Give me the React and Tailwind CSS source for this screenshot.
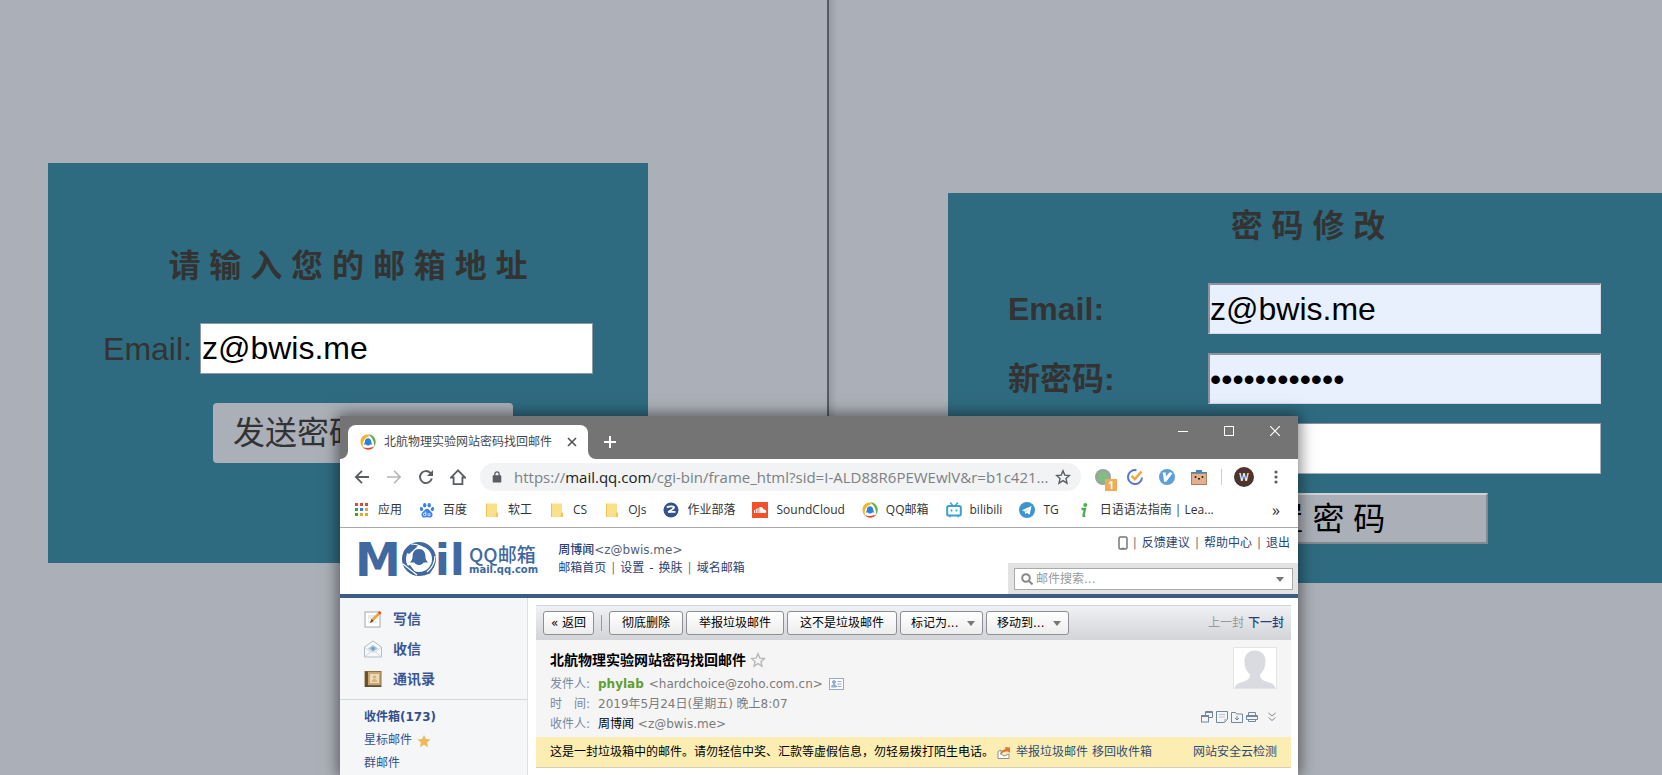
import React from "react";

const sans = "font-['Open_Sans','Noto_Sans_CJK_SC',sans-serif]";
const mailFont = "font-['DejaVu_Sans','Noto_Sans_CJK_SC',sans-serif]";
const formFont = "font-['Liberation_Sans','Noto_Sans_CJK_SC',sans-serif]";

/* ---------- icons ---------- */

function MailRing({ className = "size-4" }) {
  return (
    <svg viewBox="0 0 16 16" className={className} aria-hidden="true">
      <path d="M7 0.4C2.6 1 0 4.6 0.6 8.9c.3 1.9 1.200 3.600 2.500 4.700C1.900 9 3.200 4.200 9.600 2 8.900 1 8 .5 7 .4Z" fill="#f3b32a" />
      <path d="M8 .3c4.600 0 7.900 3.700 7.700 8-.1 1.700-.6 3.100-1.500 4.300C14.300 7.600 12.500 3.300 8 .3Z" fill="#5fae46" />
      <path d="M2.600 13c3.200 3.800 9 3.700 12-.8-3.800 1.900-8.200 2.300-12 .8Z" fill="#e2492f" />
      <path d="M8 4.300c2 0 3.100 1.500 3.200 3.300.1 1.400.5 2 1.300 2.900H10c-.2 1.400-3.600 1.400-3.900 0H3.600c.8-.9 1.200-1.600 1.300-2.900C5 5.800 6 4.300 8 4.300Z" fill="#2f80d6" />
    </svg>
  );
}

function Folder() {
  return (
    <svg viewBox="0 0 16 16" className="size-4" aria-hidden="true">
      <path d="M2 1.500h11v9.500h1V15H2Z" fill="#fbe08a" />
      <path d="M2 1.500h1v13.500H2ZM12.500 10 11.500 15H14v-4Z" fill="#eec65a" />
    </svg>
  );
}

function AppsIcon() {
  const colors = ["#d64b3f", "#d64b3f", "#d64b3f", "#3f9c4f", "#3f7bd8", "#e0a92e", "#3f9c4f", "#e0a92e", "#e0a92e"];
  return (
    <svg viewBox="0 0 16 16" className="size-4" aria-hidden="true">
      {colors.map((c, i) => (
        <rect key={i} x={1 + (i % 3) * 5} y={1 + Math.floor(i / 3) * 5} width="3" height="3" fill={c} />
      ))}
    </svg>
  );
}

function Paw() {
  return (
    <svg viewBox="0 0 16 16" className="size-4" fill="#3d7fe6" aria-hidden="true">
      <ellipse cx="5.700" cy="3.200" rx="1.700" ry="2.300" />
      <ellipse cx="10.200" cy="3.200" rx="1.700" ry="2.300" />
      <ellipse cx="2.500" cy="7" rx="1.600" ry="2.100" transform="rotate(-15 2.500 7)" />
      <ellipse cx="13.500" cy="7" rx="1.600" ry="2.100" transform="rotate(15 13.500 7)" />
      <path d="M8 6.800c1.600 0 2.100 1.200 3.200 2.300 1.200 1.200 2.600 2.200 2.300 4.200-.3 2-1.900 2.500-3.600 2.200-1.300-.3-2.500-.3-3.800 0-1.700.3-3.300-.2-3.600-2.200-.3-2 1.100-3 2.300-4.200C5.900 8 6.400 6.800 8 6.800Z" />
      <path d="M6.800 9.500v4.200H5.500a1.200 1.200 0 0 1 0-2.500h1.300M9 11v2.100q0 .6.600.6h1.300V11" fill="none" stroke="#fff" strokeWidth=".8" />
    </svg>
  );
}

function ZIcon() {
  return (
    <svg viewBox="0 0 16 16" className="size-4" aria-hidden="true">
      <circle cx="8" cy="8" r="7.500" fill="#35508c" />
      <path d="M3.800 5.500c2.500-1.300 6-1.500 7.200-.3.800 1.600-3.500 2.800-5.800 5 2.500-.8 4.300-.2 7.300-.4" fill="none" stroke="#fff" strokeWidth="1.700" />
    </svg>
  );
}

function SoundCloud() {
  return (
    <svg viewBox="0 0 16 16" className="size-4" aria-hidden="true">
      <rect width="16" height="16" fill="#f0502a" />
      <path d="M2.500 8v3M4.300 6.800v4.200M6 6v5" stroke="#fff" strokeWidth="1" />
      <path d="M7.300 5.500c2-1.100 4 .1 4.200 2.100 1.600-.3 2.700.4 2.700 1.800 0 1-.7 1.700-1.700 1.700H7.300Z" fill="#fff" />
    </svg>
  );
}

function Bili() {
  return (
    <svg viewBox="0 0 16 16" className="size-4" fill="none" stroke="#3c9fce" aria-hidden="true">
      <path d="m4.500 1 2 2.300M11.500 1l-2 2.300" strokeWidth="1.500" strokeLinecap="round" />
      <rect x="1.200" y="4" width="13.600" height="9.500" rx="1.600" strokeWidth="2" />
      <path d="M5.500 7.500v2M10.500 7.500v2" strokeWidth="1.800" />
      <path d="M4 14v1.300M12 14v1.300" strokeWidth="1.500" />
    </svg>
  );
}

function Telegram() {
  return (
    <svg viewBox="0 0 16 16" className="size-4" aria-hidden="true">
      <circle cx="8" cy="8" r="8" fill="#3d95d0" />
      <path d="M3 8.200 12.600 4l-2 8.700-2.800-2-1.500 1.600-.5-2.900Z" fill="#fff" />
      <path d="m5.800 9.400 4.600-3.500-3.300 4.300Z" fill="#b9d9ee" />
    </svg>
  );
}

function GreenI() {
  return (
    <svg viewBox="0 0 16 16" className="size-4" aria-hidden="true">
      <circle cx="9.300" cy="3" r="1.900" fill="#4cae4c" />
      <path d="M5.500 7h3.500L7.400 13.500q0 1 1.800.3" fill="none" stroke="#4cae4c" strokeWidth="2.300" />
    </svg>
  );
}

function StarOutline({ className }) {
  return (
    <svg viewBox="0 0 16 16" className={className} fill="none" stroke="currentColor" strokeWidth="1.400" aria-hidden="true">
      <path d="m8 1.800 1.800 4.300 4.700.4L11 9.600l1 4.600-4-2.500-4 2.500 1-4.600-3.500-3.100 4.700-.4Z" />
    </svg>
  );
}

function Caret() {
  return (
    <svg viewBox="0 0 8 5" className="h-[5px] w-2" aria-hidden="true">
      <path d="M0 0h8L4 5Z" fill="#777" />
    </svg>
  );
}

/* ---------- background pages ---------- */

function SendResetPage() {
  return (
    <section className="bg-[#abafb7] pt-[163px] pl-12">
      <form className="flex h-[400px] w-[600px] flex-col items-center bg-[#2f6b80] pt-[79px] text-[32px] text-[#333]" onSubmit={(e) => e.preventDefault()}>
        <h1 className="leading-[48px] font-bold">请 输 入 您 的 邮 箱 地 址</h1>
        <div className="mt-[33px] flex items-center gap-2">
          <label htmlFor="reset-email">Email:</label>
          <input id="reset-email" type="text" defaultValue="z@bwis.me" className="h-[51px] w-[393px] border border-[#8b9aa6] bg-white px-px text-black" />
        </div>
        <button className="mt-[29px] ml-[30px] h-[60px] w-[300px] rounded bg-[#abafb7] pl-5 text-left">发送密码邮件</button>
      </form>
    </section>
  );
}

function FieldRow({ id, label, type, value, filled }) {
  return (
    <div className="flex h-[51px] items-center">
      <label htmlFor={id} className="w-[200px] font-bold">{label}</label>
      <input
        id={id}
        type={type}
        defaultValue={value}
        className={
          filled
            ? "h-full w-[393px] border-t-2 border-l-2 border-r border-b border-t-[#8f929b] border-l-[#8f929b] border-r-[#d5dae6] border-b-[#d5dae6] bg-[#e8f0fe] text-black"
            : "h-full w-[393px] border border-t-[#8f929b] border-l-[#8f929b] border-r-[#a5b0bb] border-b-[#a5b0bb] bg-white text-black"
        }
      />
    </div>
  );
}

function ChangePasswordPage() {
  return (
    <section className="overflow-hidden border-l-2 border-[#565b63] bg-[linear-gradient(to_right,#979ba3,#abafb7_8px)] pt-[193px] pl-[119px]">
      <form className="flex h-[390px] w-[720px] flex-col bg-[#2f6b80] px-[60px] pt-[9px] text-[32px] text-[#333]" onSubmit={(e) => e.preventDefault()}>
        <h1 className="text-center leading-[48px] font-bold">密 码 修 改</h1>
        <div className="mt-[33px] flex flex-col gap-[19px]">
          <FieldRow id="cp-email" label="Email:" type="text" value="z@bwis.me" filled />
          <FieldRow id="cp-new" label="新密码:" type="password" value="abcdefghijkl" filled />
          <FieldRow id="cp-repeat" label="确认密码:" type="password" value="" />
        </div>
        <button className="mt-[19px] h-[51px] w-[360px] self-center border-2 border-[#d0d2d8] border-r-[#85888f] border-b-[#85888f] bg-[#abafb7] leading-none text-black">
          重 置 密 码
        </button>
      </form>
    </section>
  );
}

/* ---------- browser chrome ---------- */

function TitleBar() {
  return (
    <div className="flex h-[43px] items-start bg-[#747474] text-white">
      <div className="flex h-full flex-none items-end">
        <svg viewBox="0 0 8 8" className="size-2" aria-hidden="true"><path d="M8 0v8H0a8 8 0 0 0 8-8Z" fill="#fff" /></svg>
        <div className="flex h-[34px] w-60 items-center rounded-t-lg bg-white pr-2 pl-3 text-[#45494d]">
          <MailRing />
          <span className="ml-2 flex-1 text-xs whitespace-nowrap">北航物理实验网站密码找回邮件</span>
          <button aria-label="关闭标签页" className="flex size-4 items-center justify-center">
            <svg viewBox="0 0 10 10" className="size-2.5" stroke="#555" strokeWidth="1.700"><path d="m1 1 8 8M9 1 1 9" /></svg>
          </button>
        </div>
        <svg viewBox="0 0 8 8" className="size-2" aria-hidden="true"><path d="M0 0v8h8a8 8 0 0 1-8-8Z" fill="#fff" /></svg>
      </div>
      <button aria-label="新标签页" className="mt-[18px] ml-1.5 flex size-4 items-center justify-center">
        <svg viewBox="0 0 12 12" className="size-3" stroke="#fff" strokeWidth="2"><path d="M6 0v12M0 6h12" /></svg>
      </button>
      <div className="ml-auto flex h-[30px]">
        <button aria-label="最小化" className="flex w-[46px] items-center justify-center">
          <svg viewBox="0 0 10 10" className="size-[10px]" stroke="#fff"><path d="M0 5.500h10" /></svg>
        </button>
        <button aria-label="最大化" className="flex w-[46px] items-center justify-center">
          <svg viewBox="0 0 10 10" className="size-[10px]" fill="none" stroke="#fff"><rect x=".5" y=".5" width="9" height="9" /></svg>
        </button>
        <button aria-label="关闭" className="flex w-[46px] items-center justify-center">
          <svg viewBox="0 0 10 10" className="size-[10px]" stroke="#fff" strokeWidth="1.200"><path d="m0 0 10 10M10 0 0 10" /></svg>
        </button>
      </div>
    </div>
  );
}

function ToolButton({ label, children }) {
  return <button aria-label={label} className="flex size-8 flex-none items-center justify-center">{children}</button>;
}

function AddressBar() {
  return (
    <div className="flex h-9 items-center bg-white pr-1.5 pl-1.5 text-[#5a5d61]">
      <ToolButton label="后退">
        <svg viewBox="0 0 16 16" className="size-4" fill="none" stroke="currentColor" strokeWidth="1.800"><path d="M15 8H2M8 1.800 1.800 8 8 14.200" /></svg>
      </ToolButton>
      <ToolButton label="前进">
        <svg viewBox="0 0 16 16" className="size-4" fill="none" stroke="#b5b5b5" strokeWidth="1.600"><path d="M1 8h13M8 1.800 14.200 8 8 14.200" /></svg>
      </ToolButton>
      <ToolButton label="重新加载">
        <svg viewBox="0 0 16 16" className="size-4" fill="none" stroke="currentColor" strokeWidth="1.900"><path d="M13.800 9.500A6 6 0 1 1 12.300 3.900L14 5.600" /><path d="M15 1v6H9Z" fill="currentColor" stroke="none" /></svg>
      </ToolButton>
      <ToolButton label="主页">
        <svg viewBox="0 0 16 16" className="size-4" fill="none" stroke="currentColor" strokeWidth="1.800"><path d="M8 1.300.9 8.500h2.700v6.600h8.800V8.500h2.700Z" /></svg>
      </ToolButton>
      <div className="ml-1.5 flex h-7 min-w-0 flex-1 items-center rounded-full bg-[#f1f3f4] pr-2.5 pl-3">
        <svg viewBox="0 0 10 14" className="h-3 w-[10px] flex-none" aria-hidden="true">
          <rect x="0" y="5" width="10" height="8.500" rx="1" fill="#5a5d61" />
          <path d="M2.500 6V3.500a2.500 2.500 0 0 1 5 0V6" fill="none" stroke="#5a5d61" strokeWidth="1.500" />
        </svg>
        <a href="#address" className="ml-3 flex-1 text-[15px] leading-5 whitespace-nowrap text-[#7d8084]">
          https://<span className="text-[#202124]">mail.qq.com</span>/cgi-bin/frame_html?sid=I-ALD88R6PEWEwlV&amp;r=b1c421...
        </a>
        <button aria-label="收藏"><StarOutline className="size-4" /></button>
      </div>
      <div className="ml-1.5 flex items-center">
        <ToolButton label="扩展一">
          <span className="relative">
            <svg viewBox="0 0 16 16" className="size-4"><circle cx="8" cy="8" r="8" fill="#9aa39c" /><circle cx="8" cy="8" r="5.500" fill="#84bd84" /></svg>
            <span className="absolute -right-1.5 -bottom-1.5 flex h-3 w-3 items-center justify-center bg-[#efab55] text-[10px] leading-none font-bold text-white">1</span>
          </span>
        </ToolButton>
        <ToolButton label="扩展二">
          <svg viewBox="0 0 16 16" className="size-4" fill="none"><path d="M9.500 1.200A7 7 0 1 0 15 8.500" stroke="#5478d8" strokeWidth="2" /><path d="m4.500 6.800 3.300 3.300L14.500 2.500" stroke="#f2a93b" strokeWidth="2.600" /></svg>
        </ToolButton>
        <ToolButton label="扩展三">
          <svg viewBox="0 0 16 16" className="size-4"><circle cx="8" cy="8" r="8" fill="#5f9fd8" /><path d="M3.500 3.500h3.300v4L11 3l2.500 1.300L7.200 12.800H5L4.300 6.500Z" fill="#fff" /></svg>
        </ToolButton>
        <ToolButton label="扩展四">
          <svg viewBox="0 0 16 16" className="size-4"><path d="M5 1h6v2h5v3H0V3h5Z" fill="#3f86cf" /><rect x=".5" y="4.500" width="15" height="11" fill="#e2b18c" stroke="#a87f62" /><circle cx="4.500" cy="8" r="1" fill="#222" /><circle cx="11.500" cy="8" r="1" fill="#222" /><path d="m7 10 1-1 1 1Z" fill="#222" stroke="#222" /></svg>
        </ToolButton>
        <span className="mx-1.5 h-4 w-px bg-[#ccc]" />
        <ToolButton label="个人资料"><span className="flex size-5 items-center justify-center rounded-full bg-[#4e342e] text-[10px] font-semibold text-white">W</span></ToolButton>
        <ToolButton label="菜单">
          <svg viewBox="0 0 4 16" className="h-4 w-1" fill="#5a5d61"><circle cx="2" cy="3" r="1.600" /><circle cx="2" cy="8" r="1.600" /><circle cx="2" cy="13" r="1.600" /></svg>
        </ToolButton>
      </div>
    </div>
  );
}

const bookmarks = [
  [AppsIcon, "应用"],
  [Paw, "百度"],
  [Folder, "软工"],
  [Folder, "CS"],
  [Folder, "OJs"],
  [ZIcon, "作业部落"],
  [SoundCloud, "SoundCloud"],
  [MailRing, "QQ邮箱"],
  [Bili, "bilibili"],
  [Telegram, "TG"],
  [GreenI, "日语语法指南 | Lea..."],
];

function Bookmarks() {
  return (
    <nav aria-label="书签" className="flex h-[33px] items-center gap-[17px] border-b border-[#aaa] bg-white pr-[18px] pb-0.5 pl-3.5 text-xs whitespace-nowrap text-[#333]">
      {bookmarks.map(([Icon, text]) => (
        <a key={text} href="#bookmark" className="flex items-center gap-2"><Icon />{text}</a>
      ))}
      <button aria-label="更多书签" className="ml-auto text-base leading-none">»</button>
    </nav>
  );
}

/* ---------- mail page ---------- */

function MailLogo() {
  return (
    <a href="#home" aria-label="Mail QQ邮箱 mail.qq.com" className="flex items-center gap-2 text-[#3f69a0]">
      <svg viewBox="0 0 106 38" className="h-[38px] w-[106px] overflow-visible" fill="#3f69a0">
        <text x="-1" y="35" fontFamily="DejaVu Sans" fontWeight="700" fontSize="46">M</text>
        <circle cx="63" cy="18" r="19.500" fill="#fff" />
        <circle cx="63" cy="18" r="15" fill="none" stroke="#3f69a0" strokeWidth="4" />
        <path d="M49 10 59 2.500 61 6 53 13ZM78 26l-13 6 3 2.500 6-2ZM48 26l6-2 6 8Z" />
        <path d="M47 23 61 34M55 3c8 0 14 4 18 9M79 15c0 7-3 12-8 16" fill="none" stroke="#fff" strokeWidth="1.200" />
        <path d="M63 8c4.500 0 6.300 3.500 6.400 7.200.1 3 .8 4.200 2.600 6.300h-4.500c-.6 3.200-8.400 3.200-9 0H54c1.800-2.100 2.500-3.300 2.600-6.300C56.700 11.500 58.500 8 63 8Z" />
        <text x="79" y="34" fontFamily="DejaVu Sans" fontWeight="700" fontSize="43">i</text>
        <text x="94" y="34" fontFamily="DejaVu Sans" fontWeight="700" fontSize="43">l</text>
      </svg>
      <span className="-ml-px flex flex-col">
        <span className="font-['Noto_Sans_CJK_SC',sans-serif] text-[19px] leading-5 font-medium">QQ邮箱</span>
        <span className="text-[10px] leading-3 font-bold">mail.qq.com</span>
      </span>
    </a>
  );
}

function Bar() {
  return <span className="text-[#777]">|</span>;
}

function MailHeader() {
  return (
    <header className="flex h-[70px] flex-none justify-between border-b-4 border-[#3e5c82] bg-white text-xs text-[#2c4273]">
      <div className="flex items-start pt-[13px] pl-4">
        <MailLogo />
        <div className="ml-5 leading-[18px] whitespace-nowrap">
          <div><b className="font-medium">周博闻</b><span className="text-[#555f7a]">&lt;z@bwis.me&gt;</span></div>
          <div className="flex gap-[5px]">
            <a href="#home">邮箱首页</a><Bar /><a href="#settings">设置</a>-<a href="#skin">换肤</a><Bar /><a href="#domain">域名邮箱</a>
          </div>
        </div>
      </div>
      <div className="flex flex-col items-end justify-between">
        <div className="flex items-center gap-[5px] pt-1.5 pr-2 leading-[18px]">
          <svg viewBox="0 0 10 14" className="h-3.5 w-2.5" fill="none" stroke="#777" strokeWidth="1.500" aria-hidden="true"><rect x="1" y="1" width="8" height="12" rx="1.500" /><path d="M3.500 12.500h3" /></svg>
          <Bar /><a href="#feedback">反馈建议</a><Bar /><a href="#help">帮助中心</a><Bar /><a href="#logout">退出</a>
        </div>
        <div className="w-[290px] bg-[#e3e3e4] pt-[5px] pr-[5px] pb-1 pl-1.5">
          <div className="flex h-[22px] items-center border border-[#aaa] bg-white px-1.5">
            <svg viewBox="0 0 12 12" className="size-3" fill="none" stroke="#888" strokeWidth="2" aria-hidden="true"><circle cx="5" cy="5" r="3.800" /><path d="m8 8 3.500 3.500" /></svg>
            <input type="search" aria-label="邮件搜索" placeholder="邮件搜索..." className="ml-[3px] h-full min-w-0 flex-1 bg-transparent placeholder:text-[#999]" />
            <button aria-label="搜索选项" className="px-0.5"><Caret /></button>
          </div>
        </div>
      </div>
    </header>
  );
}

function Sidebar() {
  return (
    <aside className="w-[188px] flex-none border-r border-[#dcdfe4] bg-[#f5f6f8] text-xs text-[#33508c]">
      <ul className="flex flex-col border-b border-[#d5d8dd] pt-1.5 pb-[5px] pl-6 text-sm font-bold text-[#3a5796]">
        <li>
          <a href="#write" className="flex h-[30px] items-center gap-[11px]">
            <svg viewBox="0 0 18 18" className="size-[18px]"><rect x="1" y="2" width="15" height="15" fill="#fff" stroke="#a5a8ad" /><path d="M4 6h8M4 8h6M4 12h9" stroke="#cfd3d8" /><path d="m6 13 1.500-4L15.500 1l2 2-8 8Z" fill="#f1a33a" /><path d="m6 13 1.500-4 2 2Z" fill="#55422b" /><path d="m14 2.500 1.500-1.500 2 2L16 4.500Z" fill="#d4513c" /></svg>写信
          </a>
        </li>
        <li>
          <a href="#receive" className="flex h-[30px] items-center gap-[11px]">
            <svg viewBox="0 0 18 18" className="size-[18px]"><path d="M.5 7 9 1l8.500 6v10H.5Z" fill="#f6f9fb" stroke="#b3bbc4" /><path d="m.5 7 6 5h5l6-5M.5 17l6-5M17.500 17l-6-5" fill="none" stroke="#cdd5dc" /><path d="M4 8.500 9 5l5 3.500L9 12Z" fill="#a9c2d8" /><circle cx="9" cy="8.500" r="1.500" fill="#6d97be" /></svg>收信
          </a>
        </li>
        <li>
          <a href="#contacts" className="flex h-[30px] items-center gap-[11px]">
            <svg viewBox="0 0 18 18" className="size-[18px]"><rect x="1" y="1.500" width="16" height="15" fill="#c9a870" stroke="#8c7148" /><rect x="1" y="1.500" width="3" height="15" fill="#6b5330" /><rect x="6" y="4" width="9" height="9" fill="#eddcb9" /><circle cx="10.500" cy="7" r="1.800" fill="#d3b684" /><path d="M7.500 12c0-4 6-4 6 0Z" fill="#d3b684" /><path d="M1 16h16" stroke="#59452a" strokeWidth="1.500" /></svg>通讯录
          </a>
        </li>
      </ul>
      <ul className="flex flex-col pt-1.5 pl-6 leading-[23px]">
        <li><a href="#inbox" className="font-bold">收件箱(173)</a></li>
        <li>
          <a href="#starred" className="flex items-center gap-[5px]">星标邮件
            <svg viewBox="0 0 16 16" className="size-3.5"><path d="m8 1 2.200 4.800 5.300.5-4 3.500 1.200 5.200L8 12.300 3.300 15l1.200-5.200-4-3.500 5.300-.5Z" fill="#efba59" /></svg>
          </a>
        </li>
        <li><a href="#groups">群邮件</a></li>
      </ul>
    </aside>
  );
}

const btn = "h-6 rounded-[3px] border border-[#8d8f93] bg-linear-to-b from-white to-[#ededee] text-center leading-none text-black";

function MenuSelect({ label }) {
  return (
    <span className="grid w-[83px] items-center">
      <select aria-label={label} className={`${btn} col-start-1 row-start-1 w-full appearance-none pl-2.5 text-left`}><option>{label}</option></select>
      <span className="pointer-events-none col-start-1 row-start-1 mr-2 justify-self-end"><Caret /></span>
    </span>
  );
}

function MailToolbar() {
  return (
    <div className="flex h-[35px] items-center gap-[3px] border-t border-[#ccd6e2] bg-linear-to-b from-[#eff1f5] to-[#d3d4d7] pr-[7px] pl-[7px] whitespace-nowrap">
      <button className={`${btn} w-[51px]`}>« 返回</button>
      <span className="mx-1 h-4 w-px bg-[#999]" />
      <button className={`${btn} w-[74px]`}>彻底删除</button>
      <button className={`${btn} w-[98px]`}>举报垃圾邮件</button>
      <button className={`${btn} w-[110px]`}>这不是垃圾邮件</button>
      <MenuSelect label="标记为..." />
      <MenuSelect label="移动到..." />
      <span className="ml-auto flex gap-1">
        <span className="text-[#999]">上一封</span>
        <a href="#next" className="font-medium text-[#24407a]">下一封</a>
      </span>
    </div>
  );
}

function MessageActions() {
  return (
    <div className="flex items-center gap-[3px] text-[#72879b]">
      <button aria-label="新窗口打开"><svg viewBox="0 0 12 12" className="size-3" fill="none" stroke="currentColor"><path d="M4.500 4V.5h7v6H8" /><path d="M4.500 1.500h7" /><rect x=".5" y="4.500" width="7" height="6.500" /><path d="M.5 5.500h7" /></svg></button>
      <button aria-label="纯文本"><svg viewBox="0 0 12 12" className="size-3" fill="none" stroke="currentColor"><path d="M.5.500h11v7.500l-3 3.500h-8Z" /><path d="M3 3.500h6M3 6h6M8.500 11V8.500h3" stroke="#b9c3cd" /></svg></button>
      <button aria-label="归档"><svg viewBox="0 0 12 12" className="size-3" fill="none" stroke="currentColor"><path d="M.5 11.500v-10h4l1 1.500h6v8.500Z" /><path d="M6 5v4M4 7l2 2 2-2" /></svg></button>
      <button aria-label="打印"><svg viewBox="0 0 12 12" className="size-3" fill="none" stroke="currentColor"><path d="M2.500 4V1.500h7V4M.5 4.500h11v4H.5Z" /><path d="M1 5.500h10" /><path d="M2.500 8v2.500h7V8" /></svg></button>
      <button aria-label="展开" className="ml-1.5"><svg viewBox="0 0 10 10" className="size-2.5" fill="none" stroke="#888"><path d="m1.500 1 3.500 3L8.500 1M1.500 5.500 5 8.500l3.500-3" /></svg></button>
    </div>
  );
}

function Message() {
  return (
    <main className="min-w-0 flex-1 bg-white pt-[7px] pr-[7px] pl-2 text-xs">
      <MailToolbar />
      <div className="flex justify-between bg-[#f5f5f5] pr-3.5 pl-3.5 text-[#7b7b7b]">
        <div className="flex h-[97px] flex-col pt-2">
          <h2 className="flex items-center gap-1 text-sm leading-6 font-bold text-black">北航物理实验网站密码找回邮件<button aria-label="星标"><StarOutline className="size-4 text-[#b8b8b8]" /></button></h2>
          <dl className="mt-0.5 grid grid-cols-[48px_auto] leading-5 whitespace-nowrap">
            <dt className="text-[#7787a1]">发件人:</dt>
            <dd className="flex items-center"><b className="mr-[5px] text-[#5fa030]">phylab</b>&lt;hardchoice@zoho.com.cn&gt;
              <svg viewBox="0 0 15 12" className="ml-1.5 h-3 w-[15px]" fill="none" stroke="#8fadd0"><rect x=".5" y=".5" width="14" height="11" fill="#fff" /><path d="M8.500 3.500h4M8.500 6h4M8.500 8.500h4" /><circle cx="5" cy="4" r="1.500" fill="#8fadd0" /><path d="M2.500 9c.5-3.500 4.500-3.500 5 0Z" fill="#8fadd0" /></svg>
            </dd>
            <dt className="text-[#7787a1]">时　间:</dt>
            <dd>2019年5月24日(星期五) 晚上8:07</dd>
            <dt className="text-[#7787a1]">收件人:</dt>
            <dd><span className="text-black">周博闻</span> &lt;z@bwis.me&gt;</dd>
          </dl>
        </div>
        <div className="flex flex-col items-end justify-between pt-[7px] pb-3.5">
          <svg viewBox="0 0 44 42" className="h-[42px] w-11" role="img" aria-label="头像">
            <rect x=".5" y=".5" width="43" height="41" fill="#fff" stroke="#e4e4e6" />
            <path d="M22 3.500c7 0 11 5 10.500 12-.3 5.500-2.500 9.500-5.500 12 0 5 4 6.500 9 8 3.500 1 5.500 2.500 6.500 5.500h-41c1-3 3-4.500 6.500-5.500 5-1.500 9-3 9-8-3-2.500-5.200-6.500-5.500-12C11 8.500 15 3.500 22 3.500Z" fill="#d9dbe1" />
          </svg>
          <MessageActions />
        </div>
      </div>
      <div className="flex h-[31px] items-center border-b border-[#d5cfb5] bg-[#fceeb2] pr-3.5 pl-3.5 whitespace-nowrap">
        <span className="text-black">这是一封垃圾箱中的邮件。请勿轻信中奖、汇款等虚假信息，勿轻易拨打陌生电话。</span>
        <svg viewBox="0 0 14 13" className="mr-[5px] ml-[3px] h-[13px] w-3.5 flex-none" aria-hidden="true"><path d="M1 5.500 4 4v4l3 2 5-2v4.500H1Z" fill="#fff" stroke="#8e8f96" /><path d="M3.500 9C3.500 5 6 3.500 8.500 3.300L8 1l5 .5V7L11 5.500C8 5 5.500 6 3.500 9Z" fill="#e2743a" /></svg>
        <a href="#report" className="text-[#334a75]">举报垃圾邮件</a>
        <a href="#move" className="ml-1 text-[#334a75]">移回收件箱</a>
        <a href="#scan" className="ml-auto text-[#334a75]">网站安全云检测</a>
      </div>
    </main>
  );
}

function BrowserWindow() {
  return (
    <div className={`absolute top-[416px] bottom-0 left-[340px] flex w-[958px] flex-col bg-white shadow-[0_0_14px_2px_rgba(0,0,0,0.5)] ${sans}`}>
      <TitleBar />
      <AddressBar />
      <Bookmarks />
      <div className={`flex min-h-0 flex-1 flex-col ${mailFont}`}>
        <MailHeader />
        <div className="flex min-h-0 flex-1 overflow-hidden">
          <Sidebar />
          <Message />
        </div>
      </div>
    </div>
  );
}

export default function App() {
  return (
    <div className={`relative grid h-screen grid-cols-[827fr_835fr] overflow-hidden ${formFont}`}>
      <SendResetPage />
      <ChangePasswordPage />
      <BrowserWindow />
    </div>
  );
}
